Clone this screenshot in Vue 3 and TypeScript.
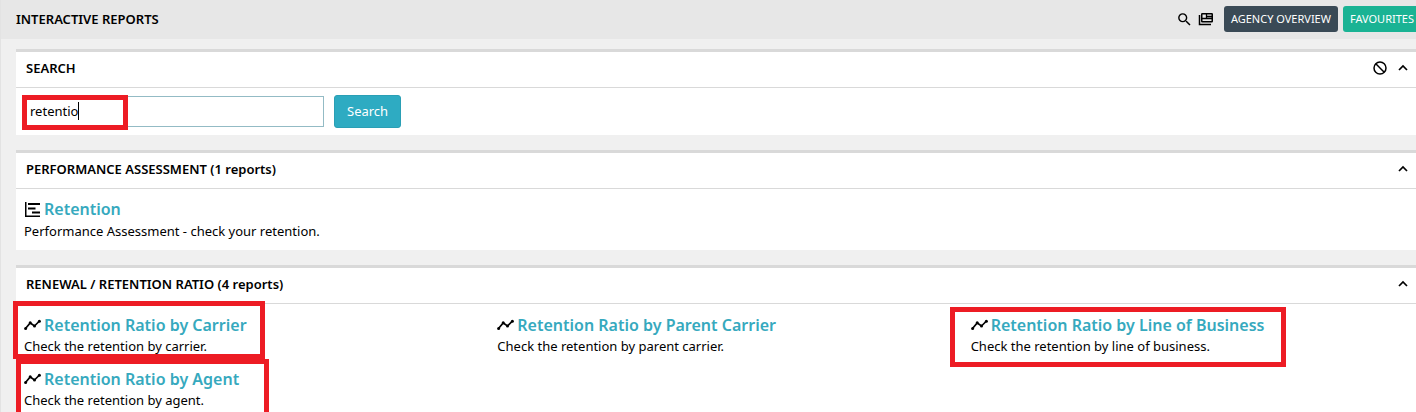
<script setup lang="ts">
import { ref } from 'vue'

interface Report {
  title: string
  text: string
  mark?: string
}

interface Group {
  name: string
  icon: 'bars' | 'trend'
  reports: Report[]
  count: number
}

const query = ref('retentio')

const groups: Group[] = [
  {
    name: 'PERFORMANCE ASSESSMENT',
    icon: 'bars',
    count: 1,
    reports: [{ title: 'Retention', text: 'Performance Assessment - check your retention.' }],
  },
  {
    name: 'RENEWAL / RETENTION RATIO',
    icon: 'trend',
    count: 4,
    reports: [
      { title: 'Retention Ratio by Carrier', text: 'Check the retention by carrier.', mark: 'mark-carrier' },
      { title: 'Retention Ratio by Parent Carrier', text: 'Check the retention by parent carrier.' },
      { title: 'Retention Ratio by Line of Business', text: 'Check the retention by line of business.', mark: 'mark-line' },
      { title: 'Retention Ratio by Agent', text: 'Check the retention by agent.', mark: 'mark-agent' },
    ],
  },
]
</script>

<template>
  <div class="page">
    <header class="topbar">
      <h1>INTERACTIVE REPORTS</h1>
      <div class="actions">
        <button class="icon-btn" type="button" aria-label="Search">
          <svg width="17" height="17" viewBox="0 0 24 24" fill="currentColor"><path d="M15.500 14h-.79l-.28-.27A6.470 6.470 0 0 0 16 9.500 6.500 6.500 0 1 0 9.500 16c1.610 0 3.090-.59 4.230-1.570l.27.28v.79l5 4.990L20.490 19l-4.990-5zm-6 0C7.010 14 5 11.990 5 9.500S7.010 5 9.500 5 14 7.010 14 9.500 11.990 14 9.500 14z" /></svg>
        </button>
        <button class="icon-btn news" type="button" aria-label="News">
          <svg width="16" height="14" viewBox="0 0 16 14" fill="none" stroke="currentColor">
            <path d="M1.500 3v9.500H13" stroke-width="1.500" />
            <rect x="3.750" y="1.750" width="10.500" height="8" rx=".5" stroke-width="1.500" />
            <path d="M4 6.500h10M8.500 2v4.500M8.500 4.500H14" stroke-width="1.300" />
          </svg>
        </button>
        <button class="btn dark" type="button">AGENCY OVERVIEW</button>
        <button class="btn green" type="button">FAVOURITES</button>
      </div>
    </header>

    <main class="content">
      <span class="edge-dot"></span>
      <section class="panel">
        <div class="panel-head">
          <h2>SEARCH</h2>
          <div class="tools">
            <button class="icon-btn" type="button" aria-label="Clear">
              <svg width="16" height="16" viewBox="0 0 16 16" fill="none" stroke="currentColor" stroke-width="1.500"><circle cx="8" cy="8" r="6" /><path d="M3.800 3.800l8.400 8.400" /></svg>
            </button>
            <button class="icon-btn" type="button" aria-label="Collapse">
              <svg width="10" height="8" viewBox="0 0 10 8" fill="none" stroke="currentColor" stroke-width="1.700"><path d="M1 6l4-4 4 4" /></svg>
            </button>
          </div>
        </div>
        <form class="search" @submit.prevent>
          <div class="field">
            <input v-model="query" type="text" aria-label="Search reports" />
            <span class="caret"></span>
            <span class="mark mark-field"></span>
          </div>
          <button class="btn-search" type="submit">Search</button>
        </form>
      </section>

      <section v-for="g in groups" :key="g.name" class="panel">
        <div class="panel-head">
          <h2>{{ g.name }} <span class="count">({{ g.count }} reports)</span></h2>
          <div class="tools">
            <button class="icon-btn" type="button" aria-label="Collapse">
              <svg width="10" height="8" viewBox="0 0 10 8" fill="none" stroke="currentColor" stroke-width="1.700"><path d="M1 6l4-4 4 4" /></svg>
            </button>
          </div>
        </div>
        <div class="reports" :class="g.icon">
          <article v-for="r in g.reports" :key="r.title" class="report">
            <h3>
              <svg v-if="g.icon === 'bars'" width="17" height="16" viewBox="0 0 17 16" fill="none" stroke="currentColor">
                <path d="M1.750 0v14.250H16" stroke-width="1.500" />
                <path d="M4 2h12M4 6.500h7.500M8 10.500h8" stroke-width="2" />
              </svg>
              <svg v-else width="17" height="16" viewBox="0 0 17 16" fill="currentColor">
                <path d="M1.500 11.500L6.200 6L10.500 9L15.500 4" fill="none" stroke="currentColor" stroke-width="1.700" />
                <circle cx="1.600" cy="11.400" r="1.500" /><circle cx="6.200" cy="5.800" r="1.500" />
                <circle cx="10.500" cy="9" r="1.500" /><circle cx="15.400" cy="4.200" r="1.500" />
              </svg>
              <a href="#">{{ r.title }}</a>
            </h3>
            <p>{{ r.text }}</p>
            <span v-if="r.mark" class="mark" :class="r.mark"></span>
          </article>
        </div>
      </section>
    </main>
    <span class="corner-chip"></span>
  </div>
</template>

<style>
body {
  margin: 0;
  background: #f0f0f0;
}
</style>

<style scoped>
.page {
  position: relative;
  display: flex;
  flex-direction: column;
  min-height: 100vh;
  box-sizing: border-box;
  overflow: hidden;
  border-left: 1px solid #e3e3e3;
  background: #f0f0f0;
  color: #000;
  font: 13px/20px "Noto Sans", "Open Sans", sans-serif;
}
h1, h2, h3, p {
  margin: 0;
}
button, input {
  font: inherit;
}
.topbar {
  display: flex;
  align-items: center;
  justify-content: space-between;
  height: 38px;
  padding: 0 0 1px 15px;
  background: #e7e7e7;
}
h1, h2 {
  font-size: 13px;
  line-height: 20px;
  font-weight: 600;
}
.actions {
  display: flex;
  align-items: center;
  flex-shrink: 0;
  gap: 5px;
  margin-right: -5px;
}
.icon-btn {
  display: flex;
  padding: 0;
  border: 0;
  background: none;
  color: #000;
}
.news {
  margin-right: 5px;
}
.btn {
  height: 26px;
  padding: 0 7px;
  border: 0;
  border-radius: 3px;
  color: #fff;
  font-size: 11px;
  white-space: nowrap;
}
.dark {
  background: #3a4a56;
}
.green {
  background: #1ab394;
}
.content {
  position: relative;
  flex: 1;
  display: flex;
  flex-direction: column;
  gap: 15px;
  padding: 10px 0 0 15px;
}
.panel {
  border-top: 3px solid #d9d9d9;
  background: #fff;
}
.panel:last-child {
  flex: 1;
}
.panel-head {
  display: flex;
  align-items: center;
  justify-content: space-between;
  height: 32px;
  padding: 0 8px 3px 10px;
  border-bottom: 1px solid #d9d9d9;
}
.tools {
  display: flex;
  align-items: center;
  gap: 10px;
}
.search {
  display: flex;
  align-items: center;
  gap: 10px;
  padding: 7px 8px;
}
.field {
  position: relative;
  width: 300px;
}
.field input {
  display: block;
  width: 100%;
  height: 31px;
  box-sizing: border-box;
  padding: 0 5px 2px;
  border: 1px solid #93bbc5;
  background: #fff;
  color: #000;
  outline: 0;
}
.caret {
  position: absolute;
  left: 54px;
  top: 6px;
  width: 1px;
  height: 18px;
  background: #000;
}
.btn-search {
  height: 33px;
  padding: 0 12px 1px;
  border: 1px solid #2a9fb5;
  border-radius: 3px;
  background: #2eabc2;
  color: #fff;
}
.reports {
  display: grid;
  grid-template-columns: repeat(3, 1fr);
  margin-right: -28px;
  padding: 9px 0 9px 8px;
}
.report {
  position: relative;
  padding-bottom: 11px;
}
.reports .report:only-child {
  padding-bottom: 0;
}
h3 {
  display: flex;
  align-items: center;
  gap: 3px;
  font-size: 16px;
  line-height: 23px;
  font-weight: 600;
}
.trend {
  padding-top: 10px;
}
.trend h3 {
  line-height: 22px;
}
.trend .report {
  padding-bottom: 12px;
}
h3 svg {
  flex-shrink: 0;
}
h3 a {
  color: #36a9be;
  text-decoration: none;
  white-space: nowrap;
}
.mark {
  position: absolute;
  z-index: 1;
  box-sizing: border-box;
  border: 5px solid #ed1c24;
  pointer-events: none;
}
.mark-field {
  left: -2px;
  top: -1px;
  width: 106px;
  height: 35px;
}
.mark-carrier {
  left: -11px;
  top: -13px;
  width: 252px;
  height: 58px;
}
.mark-agent {
  left: -8px;
  top: -9px;
  width: 253px;
  height: 70px;
}
.mark-line {
  left: -21px;
  top: -7px;
  width: 336px;
  height: 60px;
}
.edge-dot {
  position: absolute;
  left: -1px;
  top: 166px;
  width: 1px;
  height: 6px;
  background: #000;
}
.corner-chip {
  position: absolute;
  right: 0;
  bottom: 0;
  width: 9px;
  height: 1px;
  background: #7a5fa5;
}
</style>
